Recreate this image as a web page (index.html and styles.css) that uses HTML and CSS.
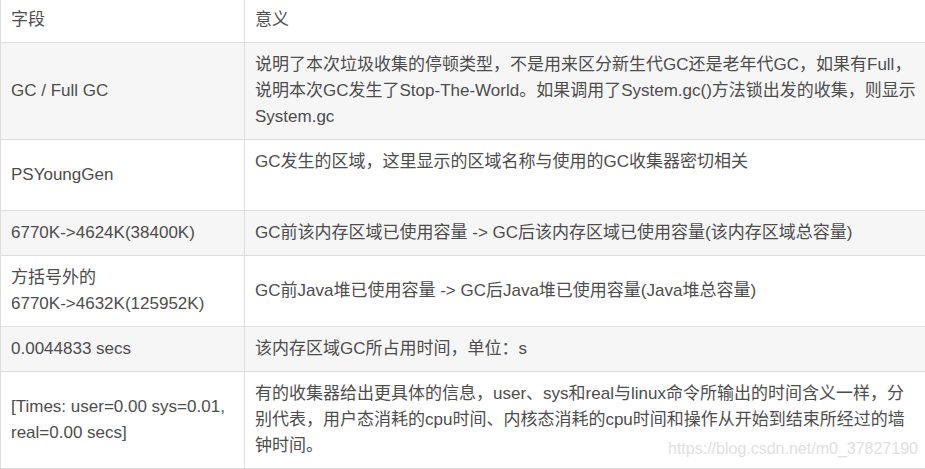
FILE: index.html
```html
<!DOCTYPE html>
<html lang="zh-CN">
<head>
  <meta charset="UTF-8">
  <title>GC日志字段</title>
  <link rel="stylesheet" href="styles.css">
</head>
<body>
  <div class="page">
    <table class="gc-table">
      <thead>
        <tr>
          <th class="col-field">字段</th>
          <th class="col-desc">意义</th>
        </tr>
      </thead>
      <tbody>
        <tr>
          <td>GC / Full GC</td>
          <td>说明了本次垃圾收集的停顿类型，不是用来区分新生代GC还是老年代GC，如果有Full，说明本次GC发生了Stop-The-World。如果调用了System.gc()方法锁出发的收集，则显示System.gc</td>
        </tr>
        <tr>
          <td>PSYoungGen</td>
          <td>GC发生的区域，这里显示的区域名称与使用的GC收集器密切相关<br>&nbsp;</td>
        </tr>
        <tr>
          <td>6770K-&gt;4624K(38400K)</td>
          <td>GC前该内存区域已使用容量 -&gt; GC后该内存区域已使用容量(该内存区域总容量)</td>
        </tr>
        <tr>
          <td>方括号外的<br>6770K-&gt;4632K(125952K)</td>
          <td>GC前Java堆已使用容量 -&gt; GC后Java堆已使用容量(Java堆总容量)</td>
        </tr>
        <tr>
          <td>0.0044833 secs</td>
          <td>该内存区域GC所占用时间，单位：s</td>
        </tr>
        <tr>
          <td>[Times: user=0.00 sys=0.01, real=0.00 secs]</td>
          <td>有的收集器给出更具体的信息，user、sys和real与linux命令所输出的时间含义一样，分别代表，用户态消耗的cpu时间、内核态消耗的cpu时间和操作从开始到结束所经过的墙钟时间。</td>
        </tr>
      </tbody>
    </table>
    <div class="watermark">https://blog.csdn.net/m0_37827190</div>
  </div>
</body>
</html>
```

FILE: styles.css
```css
* {
  box-sizing: border-box;
}
body {
  margin: 0;
  background: #fff;
  font-family: "Liberation Sans", "Noto Sans CJK SC", sans-serif;
  color: #4d4d4d;
  overflow: hidden;
}
.page {
  position: relative;
  margin-top: -3px;
}
.gc-table {
  width: 938px;
  table-layout: fixed;
  border-collapse: collapse;
  font-size: 17px;
  line-height: 26px;
}
.gc-table th,
.gc-table td {
  border: 1px solid #ddd;
  padding: 9px 10px;
  text-align: left;
  vertical-align: middle;
  font-weight: normal;
}
.gc-table .col-field {
  width: 244px;
}
.gc-table .col-desc {
  width: 694px;
}
.gc-table td:last-child,
.gc-table th:last-child {
  padding-right: 20px;
}
.gc-table thead tr {
  background: #fff;
}
.gc-table tbody tr:nth-child(odd) {
  background: #f6f6f6;
}
.gc-table tbody tr:nth-child(even) {
  background: #fff;
}
.watermark {
  position: absolute;
  left: 668px;
  top: 443px;
  font-size: 16px;
  color: #e0e0e0;
  white-space: nowrap;
}
```
